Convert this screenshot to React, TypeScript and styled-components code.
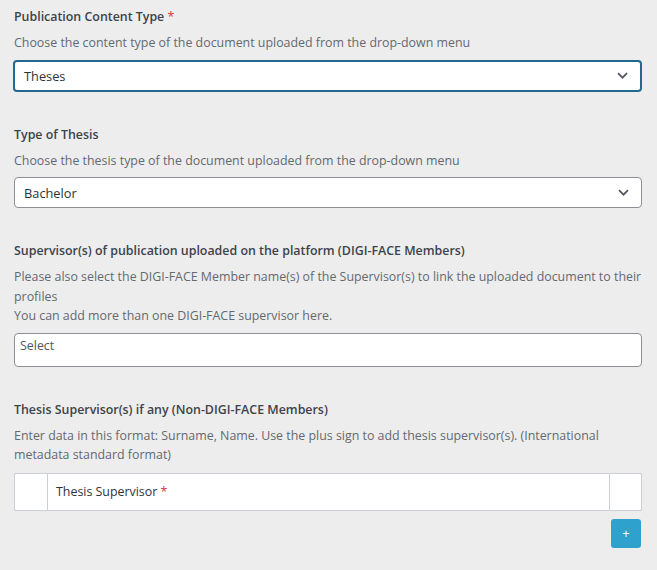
import React from "react";
import styled, { createGlobalStyle } from "styled-components";

const Global = createGlobalStyle`
  html, body { margin: 0; padding: 0; background: #eeeded; }
  body { font-family: "Open Sans", "Noto Sans", sans-serif; color: #3c434a; }
  * { box-sizing: border-box; }
`;

const Page = styled.div`
  width: 657px;
  height: 570px;
  padding: 7px 15px 0 14px;
  display: flex;
  flex-direction: column;
  gap: 33px;
`;

const Field = styled.div`
  display: flex;
  flex-direction: column;
`;

const Label = styled.div`
  font-size: 12.4px;
  font-weight: 600;
  line-height: 20px;
  color: #3c434a;
  margin-bottom: 6px;
`;

const Req = styled.span`
  color: #d63638;
  font-weight: 400;
`;

const Desc = styled.div`
  font-size: 12.4px;
  line-height: 19.5px;
  color: #646970;
  margin-bottom: 7px;
`;

const SelectBox = styled.div<{ $focused?: boolean }>`
  height: ${(p) => (p.$focused ? "32px" : "31px")};
  margin-left: ${(p) => (p.$focused ? "-1px" : "0")};
  background: #fff;
  border: ${(p) => (p.$focused ? "2px solid #21698f" : "1px solid #8c8f94")};
  border-radius: 4px;
  display: flex;
  align-items: center;
  justify-content: space-between;
  padding: 0 12px 0 9px;
  font-size: 12.8px;
  color: #2c3338;
`;

const Chevron = () => (
  <svg width="11" height="7" viewBox="0 0 11 7">
    <path d="M1 1.2l4.5 4.5 4.5-4.5" fill="none" stroke="#50575e" strokeWidth="1.7" />
  </svg>
);

const MultiBox = styled.div`
  height: 34px;
  background: #fff;
  border: 1px solid #8c8f94;
  border-radius: 4px;
  padding: 4px 5px;
  font-size: 12.4px;
  line-height: 16px;
  color: #50575e;
`;

const Table = styled.div`
  display: grid;
  grid-template-columns: 32px 1fr 32px;
  height: 38px;
  margin-top: 1px;
  background: #fff;
  border: 1px solid #ccd0d4;
`;

const Cell = styled.div<{ $divider?: boolean }>`
  border-left: ${(p) => (p.$divider ? "1px solid #ccd0d4" : "none")};
  display: flex;
  align-items: center;
  padding-left: 8px;
  font-size: 12.4px;
  color: #2c3338;
`;

const Actions = styled.div`
  display: flex;
  justify-content: flex-end;
  padding-top: 8px;
  padding-right: 1px;
`;

const AddButton = styled.button`
  width: 30px;
  height: 29px;
  border: none;
  border-radius: 3px;
  background: #2ea2cc;
  color: #fff;
  font-family: inherit;
  font-size: 13px;
  line-height: 1;
  padding: 0;
`;

export default function App() {
  return (
    <>
      <Global />
      <Page>
        <Field>
          <Label>
            Publication Content Type <Req>*</Req>
          </Label>
          <Desc>Choose the content type of the document uploaded from the drop-down menu</Desc>
          <SelectBox $focused>
            <span>Theses</span>
            <Chevron />
          </SelectBox>
        </Field>
        <Field>
          <Label>Type of Thesis</Label>
          <Desc>Choose the thesis type of the document uploaded from the drop-down menu</Desc>
          <SelectBox>
            <span>Bachelor</span>
            <Chevron />
          </SelectBox>
        </Field>
        <Field>
          <Label>Supervisor(s) of publication uploaded on the platform (DIGI-FACE Members)</Label>
          <Desc>
            Please also select the DIGI-FACE Member name(s) of the Supervisor(s) to link the uploaded document to their
            profiles
            <br />
            You can add more than one DIGI-FACE supervisor here.
          </Desc>
          <MultiBox>Select</MultiBox>
        </Field>
        <Field>
          <Label>Thesis Supervisor(s) if any (Non-DIGI-FACE Members)</Label>
          <Desc>
            Enter data in this format: Surname, Name. Use the plus sign to add thesis supervisor(s). (International
            metadata standard format)
          </Desc>
          <Table>
            <Cell />
            <Cell $divider>
              Thesis Supervisor&nbsp;<Req>*</Req>
            </Cell>
            <Cell $divider />
          </Table>
          <Actions>
            <AddButton>+</AddButton>
          </Actions>
        </Field>
      </Page>
    </>
  );
}
